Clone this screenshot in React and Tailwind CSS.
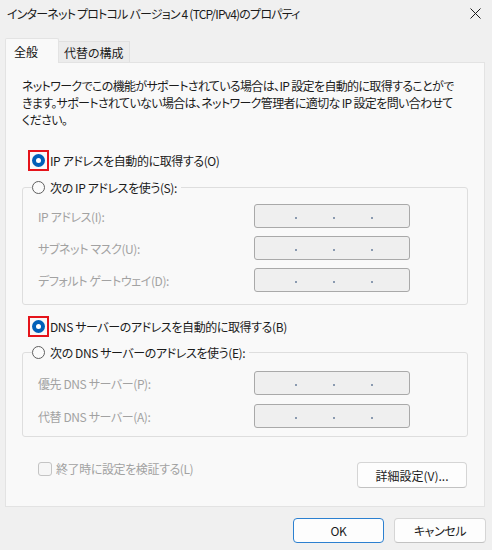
import React from 'react';

const FONT = "font-['Noto_Sans_CJK_JP','Noto_Sans',sans-serif] [font-feature-settings:'palt']";

// ラジオボタン（選択状態・赤枠ハイライト付き）
function Radio({ checked, marked }) {
  return (
    <span className="relative flex-shrink-0 w-[13px] h-[13px]">
      {checked ? (
        <span className="flex items-center justify-center w-[13px] h-[13px] rounded-full bg-[#005fb8]">
          <span className="w-[5px] h-[5px] rounded-full bg-white"></span>
        </span>
      ) : (
        <span className="block w-[13px] h-[13px] rounded-full border border-[#5f5f5f] bg-[#fbfbfb]"></span>
      )}
      {marked && <span className="absolute -inset-[4px] border-2 border-[#e5141b]"></span>}
    </span>
  );
}

function RadioRow({ checked, marked, label }) {
  return (
    <div className="flex items-center h-[20px] gap-[5px] text-[#1b1b1b] whitespace-nowrap">
      <Radio checked={checked} marked={marked} />
      <span>{label}</span>
    </div>
  );
}

// IPアドレス入力欄（無効）
function IpField() {
  return (
    <div className="w-[156px] h-[24px] rounded-[3px] border border-[#a9a9a9] bg-[#efefef] flex items-center justify-center gap-[36px] pl-[4px]">
      <span className="w-[2px] h-[2px] mt-[3px] bg-[#8a9ab0]"></span>
      <span className="w-[2px] h-[2px] mt-[3px] bg-[#8a9ab0]"></span>
      <span className="w-[2px] h-[2px] mt-[3px] bg-[#8a9ab0]"></span>
    </div>
  );
}

function FieldRow({ label }) {
  return (
    <div className="flex items-center justify-between pl-[5px] pr-[57px]">
      <span className="text-[#a2a2a2] whitespace-nowrap">{label}</span>
      <IpField />
    </div>
  );
}

function Group({ legend, rows, gap, inner }) {
  return (
    <fieldset className={`border border-[#dedede] rounded-[3px] pl-[10px] ${inner}`}>
      <legend className="px-0 -ml-px pr-[4px]">
        <RadioRow checked={false} label={legend} />
      </legend>
      <div className={`flex flex-col ${gap}`}>
        {rows.map((r) => (
          <FieldRow key={r} label={r} />
        ))}
      </div>
    </fieldset>
  );
}

export default function App() {
  return (
    <div className={`w-[492px] h-[550px] bg-[#f0f0f0] text-[12px] leading-[17px] tracking-[-0.4px] text-[#1b1b1b] ${FONT}`}>
      {/* タイトルバー */}
      <div className="h-[26px] flex items-center justify-between pl-[7px] pr-[10px]">
        <span className="text-[12px] tracking-[-0.8px] whitespace-nowrap">インターネット プロトコル バージョン 4 (TCP/IPv4)のプロパティ</span>
        <svg width="11" height="11" viewBox="0 0 11 11" className="mr-[1px]">
          <path d="M0.5 0.5 L10.5 10.5 M10.5 0.5 L0.5 10.5" stroke="#1b1b1b" strokeWidth="1" />
        </svg>
      </div>

      {/* タブ */}
      <div className="flex items-end ml-[5px] mt-[12px] h-[24px] relative z-10 tracking-normal">
        <div className="w-[54px] h-[25px] -mb-px bg-[#f9f9f9] border border-b-0 border-[#e3e3e3] rounded-t-[2px] flex items-center pl-[8px] text-[#111]">
          全般
        </div>
        <div className="h-[21px] px-[5px] bg-[#ececec] border border-l-0 border-b-0 border-[#e0e0e0] flex items-center text-[#1b1b1b]">
          代替の構成
        </div>
      </div>

      {/* パネル */}
      <div className="ml-[5px] w-[480px] h-[445px] bg-[#f9f9f9] border border-[#e3e3e3] px-[16px] pt-[14px] flex flex-col">
        <p className="leading-[17px] whitespace-nowrap tracking-[-0.65px]">
          ネットワークでこの機能がサポートされている場合は、IP 設定を自動的に取得することがで
          <br />
          きます。サポートされていない場合は、ネットワーク管理者に適切な IP 設定を問い合わせて
          <br />
          ください。
        </p>

        <div className="mt-[22px] pl-[10px]">
          <RadioRow checked marked label="IP アドレスを自動的に取得する(O)" />
        </div>

        <div className="mt-[7px]">
          <Group
            legend="次の IP アドレスを使う(S):"
            rows={['IP アドレス(I):', 'サブネット マスク(U):', 'デフォルト ゲートウェイ(D):']}
            gap="gap-[8px]"
            inner="pt-[7px] pb-[12px]"
          />
        </div>

        <div className="mt-[11px] pl-[10px]">
          <RadioRow checked marked label="DNS サーバーのアドレスを自動的に取得する(B)" />
        </div>

        <div className="mt-[6px]">
          <Group
            legend="次の DNS サーバーのアドレスを使う(E):"
            rows={['優先 DNS サーバー(P):', '代替 DNS サーバー(A):']}
            gap="gap-[9px]"
            inner="pt-[9px] pb-[8px]"
          />
        </div>

        <div className="mt-[25px] flex items-start justify-between">
          <div className="flex items-center gap-[4px] pl-[16px] -mt-[2px] text-[#a2a2a2] whitespace-nowrap">
            <span className="w-[14px] h-[14px] rounded-[3px] border border-[#c4c4c4] bg-[#f6f6f6]"></span>
            <span>終了時に設定を検証する(L)</span>
          </div>
          <button className="w-[110px] h-[26px] rounded-[4px] border border-[#d5d5d5] border-b-[#c2c2c2] bg-[#fdfdfd] text-[#1b1b1b] mr-[1px] tracking-normal">
            詳細設定(V)...
          </button>
        </div>
      </div>

      {/* フッター */}
      <div className="flex justify-end gap-[10px] pr-[6px] mt-[11px]">
        <button className="w-[91px] h-[25px] rounded-[4px] border border-[#2c80d0] bg-[#fdfdfd] text-[#1b1b1b]">
          OK
        </button>
        <button className="w-[92px] h-[25px] rounded-[4px] border border-[#d5d5d5] border-b-[#c2c2c2] bg-[#fdfdfd] text-[#1b1b1b]">
          キャンセル
        </button>
      </div>
    </div>
  );
}
